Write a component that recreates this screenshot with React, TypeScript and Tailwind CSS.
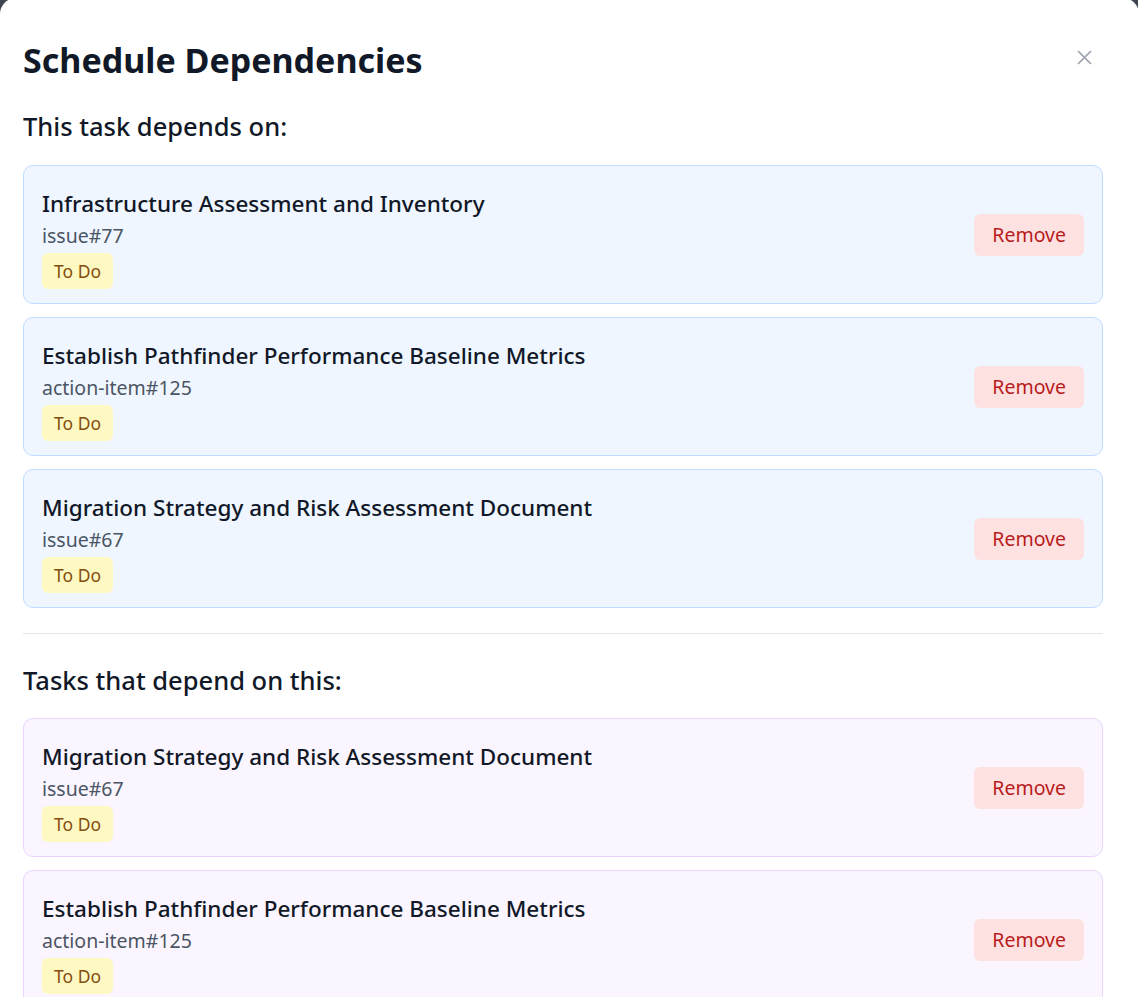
import React from 'react';

type Dep = { title: string; ref: string; status: string };

const dependsOn: Dep[] = [
  { title: 'Infrastructure Assessment and Inventory', ref: 'issue#77', status: 'To Do' },
  { title: 'Establish Pathfinder Performance Baseline Metrics', ref: 'action-item#125', status: 'To Do' },
  { title: 'Migration Strategy and Risk Assessment Document', ref: 'issue#67', status: 'To Do' },
];

const dependents: Dep[] = [
  { title: 'Migration Strategy and Risk Assessment Document', ref: 'issue#67', status: 'To Do' },
  { title: 'Establish Pathfinder Performance Baseline Metrics', ref: 'action-item#125', status: 'To Do' },
];

const DepCard = ({ dep, tone }: { dep: Dep; tone: 'blue' | 'purple' }) => (
  <div
    className={`flex items-center justify-between rounded-[10px] border px-[18px] py-[14px] ${
      tone === 'blue' ? 'bg-[#eff6ff] border-[#bfdbfe]' : 'bg-[#faf5ff] border-[#e9d5ff]'
    }`}
  >
    <div className="flex flex-col items-start pt-[8px]">
      <div className="text-[22.5px] leading-[32px] font-medium text-[#111827]">{dep.title}</div>
      <div className="mt-[2px] text-[19.5px] leading-[28px] text-[#4b5563]">{dep.ref}</div>
      <span className="mt-[3px] flex h-[36px] items-center rounded-[6px] bg-[#fef9c3] px-[12px] text-[17.5px] text-[#854d0e]">
        {dep.status}
      </span>
    </div>
    <button className="h-[42px] rounded-[6px] bg-[#fee2e2] px-[18px] text-[19.5px] text-[#b91c1c]">
      Remove
    </button>
  </div>
);

export default function App() {
  return (
    <div className="h-screen overflow-hidden bg-[#3f4550] font-['Noto_Sans',sans-serif]">
      <div className="-mt-[2px] -mr-[1px] h-[1100px] rounded-[16px] bg-white pl-[23px] pr-[36px] pt-[42px]">
        {/* Header */}
        <div className="flex items-center justify-between">
          <h1 className="text-[34px] leading-[40px] font-bold text-[#111827]">Schedule Dependencies</h1>
          <button className="mr-[11px] -mt-[6px] text-[#9ca3af]" aria-label="Close">
            <svg width="15" height="15" viewBox="0 0 15 15" fill="none" stroke="currentColor" strokeWidth="1.7">
              <path d="M1 1L14 14M14 1L1 14" />
            </svg>
          </button>
        </div>

        {/* Depends on */}
        <h2 className="mt-[30px] text-[25.5px] leading-[32px] font-medium text-[#111827]">This task depends on:</h2>
        <div className="mt-[23px] flex flex-col gap-[13px]">
          {dependsOn.map((d) => (
            <DepCard key={d.ref + d.title} dep={d} tone="blue" />
          ))}
        </div>

        <div className="mt-[25px] h-px bg-[#e5e7eb]" />

        {/* Dependents */}
        <h2 className="mt-[30px] text-[25.5px] leading-[32px] font-medium text-[#111827]">Tasks that depend on this:</h2>
        <div className="mt-[22px] flex flex-col gap-[13px]">
          {dependents.map((d) => (
            <DepCard key={d.ref + d.title} dep={d} tone="purple" />
          ))}
        </div>
      </div>
    </div>
  );
}
